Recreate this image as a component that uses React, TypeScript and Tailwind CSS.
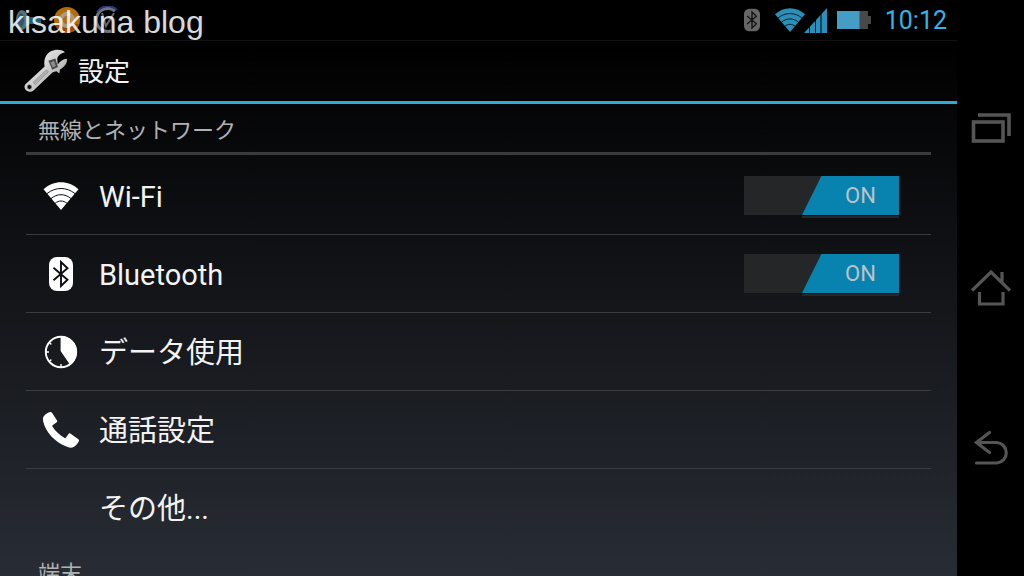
import { useState } from 'react';
import type { ReactNode } from 'react';

function WifiIcon({ className }: { className: string }) {
    return (
        <svg viewBox="0 0 36 28" className={className} aria-hidden="true">
            <path d="M0.5 7.2C10.5 -2.2 25.5 -2.2 35.5 7.2L18 28Z" fill="currentColor" />
            <g fill="none" stroke="#0b0c0e" strokeWidth="1">
                <path d="M4 11.6C12.5 4.8 23.5 4.8 32 11.6" />
                <path d="M8 16.6C14 11.4 22 11.4 28 16.6" />
                <path d="M12 21.4C15.8 18.2 20.2 18.2 24 21.4" />
            </g>
        </svg>
    );
}

function BluetoothIcon({ className }: { className: string }) {
    return (
        <svg viewBox="0 0 24 34" className={className} aria-hidden="true">
            <rect width="24" height="34" rx="8" fill="currentColor" />
            <path d="M4.5 10.8L18.5 22.8L12 29V5L18.5 11.2L4.5 23.2" fill="none" stroke="#0d0e10" strokeWidth="1.9" />
        </svg>
    );
}

function DataIcon() {
    return (
        <svg viewBox="0 0 34 34" className="w-[34px]" aria-hidden="true">
            <circle cx="17" cy="17" r="15.2" fill="none" stroke="white" strokeWidth="1.9" />
            <path d="M16.6 1V16L26.2 30A16 16 0 0 0 16.6 1Z" fill="white" />
            <path d="M2 17H5M17 32V29M5.6 8L7.4 9.4M5.6 26L7.4 24.6" stroke="white" strokeWidth="1.4" />
        </svg>
    );
}

function PhoneIcon() {
    return (
        <svg viewBox="0 0 38 38" className="w-[38px]" aria-hidden="true">
            <path
                d="M1.6 5.6C3.5 2.8 6 1.4 8.3 1C9 0.9 9.6 1.2 10 1.8L15 9.4C15.4 10.1 15.2 10.7 14.7 11.2L10.6 14.2C10.2 14.6 10.2 15 10.4 15.5C13.4 20.3 18 24.5 22.6 27C23.1 27.3 23.6 27.2 23.8 26.7L26.5 23C26.9 22.3 27.6 22.2 28.3 22.5L36.4 28.3C37 28.8 37.2 29.5 36.9 30.2C35.4 33.2 33.4 35.2 30.4 36.6C29 37 27 36.6 25 35.8C12 30.4 3.8 21 1.2 10.4C0.8 8.6 0.8 7 1.6 5.6Z"
                fill="white"
            />
        </svg>
    );
}

function WrenchIcon() {
    return (
        <svg viewBox="0 0 44 44" className="w-11" aria-hidden="true">
            <defs>
                <linearGradient id="steel" x1="0" y1="0" x2="1" y2="1">
                    <stop offset="0" stopColor="#f8f8f8" />
                    <stop offset="0.5" stopColor="#cfcfcf" />
                    <stop offset="1" stopColor="#858585" />
                </linearGradient>
            </defs>
            <path
                d="M1.2 35.6L20.6 17.6C19.2 9.4 22.6 2.6 30 1.2C34.4 0.4 38.2 1 41 3.2C36.8 4.2 33.6 6.4 33.2 10.2L33.8 15.6C36 12 39 10.2 43 9.8C43.2 14.2 40.8 18 36 20.4L35.4 24.4L32.4 22.2C29.6 22.6 28 23.6 26.6 25.2L9.8 41.2C6.8 44 2.6 43 1 39.8C0.4 38.2 0.4 36.8 1.2 35.6Z"
                fill="url(#steel)"
            />
            <path d="M24.4 11.8L31.4 9.6L34 18L28.2 20.8Z" fill="#48494c" />
            <path d="M26.4 13.2L30.2 12L31.8 17L28.6 18.6Z" fill="#8d8d8d" />
            <path d="M9 33.4L22.6 20.8L24.6 22.8L11.2 35.6Z" fill="#b0b0b0" stroke="#8c8c8c" strokeWidth="0.7" />
            <circle cx="5.4" cy="38" r="2.2" fill="#080808" stroke="#777" strokeWidth="0.8" />
        </svg>
    );
}

function NotificationIcons() {
    return (
        <svg viewBox="0 0 112 28" className="h-7 w-[112px]" aria-hidden="true">
            <path d="M12 5L22 11L33 11V18L22 18L13 23Z" fill="#1f6078" />
            <ellipse cx="14" cy="14" rx="6" ry="10" fill="#5d6e76" />
            <ellipse cx="13" cy="14" rx="3" ry="7" fill="#2a5a70" />
            <circle cx="59" cy="14" r="13" fill="#b16d08" />
            <path d="M47 18A13 13 0 0 0 71 18Z" fill="#994400" />
            <circle cx="59" cy="14" r="6" fill="none" stroke="#a79b86" strokeWidth="4" />
            <path d="M107 5A11.5 11.5 0 1 0 103 25" fill="none" stroke="#6d7385" strokeWidth="3" />
            <path d="M109 4A13 13 0 0 0 89 6" fill="none" stroke="#2b397a" strokeWidth="2" />
            <path d="M94 7L98 20L106 7" fill="none" stroke="#62646c" strokeWidth="2" />
        </svg>
    );
}

function StatusBar() {
    return (
        <header className="flex h-[41px] shrink-0 items-center border-b border-[#111] bg-black pr-2.5 pl-2 text-[#2a8fb9]">
            <NotificationIcons />
            <BluetoothIcon className="ml-auto h-6 w-4 text-[#666]" />
            <WifiIcon className="ml-3.5 h-6 w-8" />
            <svg viewBox="0 0 23 25" className="-ml-0.5 h-[25px] w-[23px]" aria-hidden="true">
                <path d="M0 25L23 0V25Z" fill="currentColor" />
                <path d="M5.5 12V25M11.5 8V25M17 4V25" stroke="black" strokeWidth="1" />
            </svg>
            <svg viewBox="0 0 34 18" className="ml-2.5 h-[18px] w-[34px]" aria-hidden="true">
                <path d="M0 0H31V5H34V13H31V18H0Z" fill="#484848" />
                <path d="M0 0H22.5V18H0Z" fill="#439dc4" />
            </svg>
            <time className="ml-3.5 pt-0.5 text-[25px] leading-10 text-[#33b5e5]">10:12</time>
        </header>
    );
}

function Switch({ label }: { label: string }) {
    const [on, setOn] = useState(true);

    return (
        <label className="relative mr-8 block h-[39px] w-[155px] cursor-pointer bg-[#252627]">
            <input
                type="checkbox"
                role="switch"
                aria-label={label}
                className="absolute inset-0 size-full cursor-pointer appearance-none"
                checked={on}
                onChange={(e) => setOn(e.target.checked)}
            />
            <span
                className={`pointer-events-none absolute top-0 flex h-full w-[97px] items-center justify-center pl-5 text-[22px] ${on ? 'right-0 bg-[#0882ae] text-[#bcc2c6] [clip-path:polygon(20%_0,100%_0,100%_100%,0_100%)]' : 'left-0 bg-[#444] text-[#999]'}`}
            >
                {on ? 'ON' : 'OFF'}
            </span>
            <span className="pointer-events-none absolute right-0 -bottom-[3px] h-0.5 w-[97px] bg-[#242628]" />
        </label>
    );
}

function SettingRow({ icon, title, toggle }: { icon?: ReactNode; title: string; toggle?: boolean }) {
    return (
        <li className="flex h-[78px] items-center border-b border-[#3a3d40] last:border-transparent">
            <button type="button" className="flex h-full flex-1 items-center text-left text-[29px] leading-10 text-[#f3f3f3]">
                <span className="ml-4 flex w-[38px] justify-center">{icon}</span>
                <span className="ml-[19px] pt-0.5">{title}</span>
            </button>
            {toggle && <Switch label={title} />}
        </li>
    );
}

function SectionTitle({ children }: { children: ReactNode }) {
    return (
        <h2 className="h-[51px] border-b-3 border-[#3b3b3c] px-3 pt-0.5 text-[22px] leading-[50px] text-[#b1b1b2]">
            {children}
        </h2>
    );
}

function NavBar() {
    return (
        <nav className="flex w-[67px] shrink-0 flex-col items-center justify-center gap-[120px] bg-black text-[#555]">
            <button type="button" aria-label="最近使ったアプリ" className="size-10">
                <svg viewBox="0 0 40 40" fill="none" stroke="currentColor" strokeWidth="3.6">
                    <rect x="2.5" y="14" width="29.5" height="19" />
                    <path d="M7 7H38V28" />
                </svg>
            </button>
            <button type="button" aria-label="ホーム" className="size-10">
                <svg viewBox="0 0 40 40" fill="none" stroke="currentColor" strokeWidth="3.2">
                    <path d="M1 22.5L20 4L39 22.5M31 4V14M8.5 24V36H32V24" />
                </svg>
            </button>
            <button type="button" aria-label="戻る" className="size-10">
                <svg viewBox="0 0 40 40" fill="none" stroke="currentColor" strokeWidth="3.2" strokeLinecap="round">
                    <path d="M18.5 4.5L5.5 14.5L18.5 24.5M6 14.5H26A10.3 10.3 0 0 1 26 35H5.5" />
                </svg>
            </button>
        </nav>
    );
}

export default function App() {
    return (
        <div className="relative flex h-screen overflow-hidden bg-black font-[Roboto,'Noto_Sans_CJK_JP',sans-serif]">
            <div className="flex min-w-0 flex-1 flex-col">
                <StatusBar />
                <div className="flex min-h-0 flex-1 flex-col bg-linear-to-b/srgb from-black to-[#282c34]">
                    <div className="flex h-[63px] shrink-0 items-center gap-2.5 border-b-3 border-[#2faadb] px-6">
                        <WrenchIcon />
                        <h1 className="pt-0.5 text-[26px] leading-10 text-[#f3f3f3]">設定</h1>
                    </div>
                    <main className="min-h-0 flex-1 overflow-hidden px-[26px]">
                        <SectionTitle>無線とネットワーク</SectionTitle>
                        <ul className="pt-0.5">
                            <SettingRow icon={<WifiIcon className="w-9 text-white" />} title="Wi-Fi" toggle />
                            <SettingRow icon={<BluetoothIcon className="w-6 text-white" />} title="Bluetooth" toggle />
                            <SettingRow icon={<DataIcon />} title="データ使用" />
                            <SettingRow icon={<PhoneIcon />} title="通話設定" />
                            <SettingRow title="その他..." />
                        </ul>
                        <SectionTitle>端末</SectionTitle>
                    </main>
                </div>
            </div>
            <NavBar />
            <p className="pointer-events-none absolute top-1 left-2 font-['Liberation_Sans',Arial,sans-serif] text-[32px] leading-9 text-white/85">
                kisakuna blog
            </p>
        </div>
    );
}
